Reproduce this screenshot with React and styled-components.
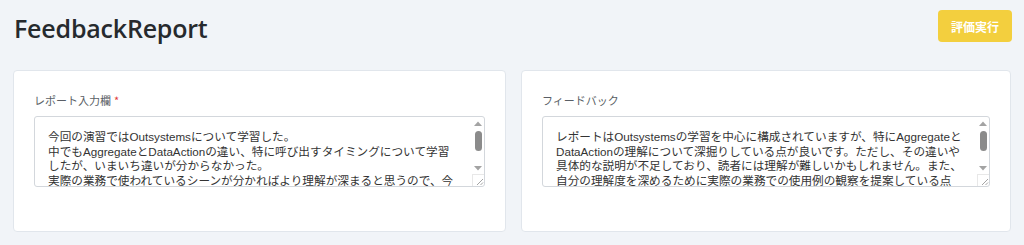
import React from "react";
import styled, { createGlobalStyle } from "styled-components";

const Global = createGlobalStyle`
  html, body { margin: 0; padding: 0; }
  body {
    background: #f1f4f8;
    font-family: "Noto Sans", "Noto Sans CJK JP", sans-serif;
    color: #333;
  }
`;

const Page = styled.div`
  display: flex;
  flex-direction: column;
  height: 245px;
  box-sizing: border-box;
`;

const Header = styled.header`
  display: flex;
  justify-content: space-between;
  align-items: flex-start;
  height: 70px;
  padding: 10px 12px 0 14px;
  box-sizing: border-box;
`;

const Title = styled.h1`
  margin: 2px 0 0;
  font-family: "Open Sans", "Noto Sans CJK JP", sans-serif;
  font-size: 25px;
  font-weight: 600;
  line-height: 32px;
  color: #262a2e;
  letter-spacing: -0.2px;
`;

const ActionButton = styled.button`
  width: 74px;
  height: 32px;
  border: none;
  border-radius: 4px;
  background: #f3cf3e;
  color: #fff;
  font-family: "Noto Sans CJK JP", sans-serif;
  font-size: 12px;
  font-weight: 700;
  cursor: pointer;
  padding: 0;
`;

const Panels = styled.main`
  display: grid;
  grid-template-columns: 493fr 490fr;
  gap: 15px;
  padding: 0 13px;
`;

const Card = styled.section`
  background: #fff;
  border: 1px solid #e1e6ec;
  border-radius: 4px;
  height: 162px;
  box-sizing: border-box;
  padding: 21px 20px 0;
  display: flex;
  flex-direction: column;
  gap: 8px;
  min-width: 0;
`;

const Label = styled.label`
  font-family: "Noto Sans CJK JP", sans-serif;
  font-size: 11px;
  line-height: 16px;
  color: #5a5f66;
`;

const Required = styled.span`
  color: #e03a3a;
  margin-left: 3px;
`;

const Field = styled.div`
  display: flex;
  height: 71px;
  box-sizing: border-box;
  border: 1px solid #d3d7dc;
  border-radius: 3px;
  background: #fff;
  overflow: hidden;
`;

const TextArea = styled.textarea`
  flex: 1;
  min-width: 0;
  height: 100%;
  box-sizing: border-box;
  border: none;
  padding: 13px 14px 0 13px;
  margin: 0;
  font-family: "Liberation Sans", "Noto Sans CJK JP", sans-serif;
  font-size: 11.65px;
  line-height: 14.5px;
  color: #333;
  background: transparent;
  resize: none;
  outline: none;
  overflow: hidden;
  text-autospace: no-autospace;
`;

const Rail = styled.div`
  width: 12px;
  flex: none;
  display: flex;
  flex-direction: column;
  align-items: center;
`;

const ArrowBox = styled.div`
  height: 12px;
  width: 100%;
  display: flex;
  align-items: center;
  justify-content: center;
`;

const Track = styled.div`
  flex: 1;
  width: 100%;
  display: flex;
  justify-content: center;
  padding-top: ${(p) => p.$offset}px;
  box-sizing: border-box;
`;

const Thumb = styled.div`
  width: 7px;
  height: ${(p) => p.$size}px;
  border-radius: 4px;
  background: #8b8b8b;
`;

const Grip = styled.div`
  width: 12px;
  height: 12px;
  box-sizing: border-box;
  border-left: 1px solid #e8e8e8;
  border-top: 1px solid #e8e8e8;
  display: flex;
  align-items: flex-end;
  justify-content: flex-end;
`;

function Arrow({ up }) {
  return (
    <ArrowBox>
      <svg width="8" height="5" viewBox="0 0 8 5">
        <path d={up ? "M0 5 L4 0.5 L8 5 Z" : "M0 0 L4 4.5 L8 0 Z"} fill="#a3a3a3" />
      </svg>
    </ArrowBox>
  );
}

function ResizeGrip() {
  return (
    <Grip>
      <svg width="10" height="10" viewBox="0 0 10 10">
        <path d="M9 3 L3 9 M9 6.5 L6.5 9" stroke="#9a9a9a" strokeWidth="0.9" fill="none" />
      </svg>
    </Grip>
  );
}

const reportText =
  "今回の演習ではOutsystemsについて学習した。\n中でもAggregateとDataActionの違い、特に呼び出すタイミングについて学習したが、いまいち違いが分からなかった。\n実際の業務で使われているシーンが分かればより理解が深まると思うので、今後は実際の業務の中でどのように使い分けられているのかを観察していきたい。\nまた、次回の演習ではScreenの作成やロジックの組み方についても学習し、理解を深めたい。";

const feedbackText =
  "レポートはOutsystemsの学習を中心に構成されていますが、特にAggregateとDataActionの理解について深掘りしている点が良いです。ただし、その違いや具体的な説明が不足しており、読者には理解が難しいかもしれません。また、自分の理解度を深めるために実際の業務での使用例の観察を提案している点は評価できます。今後は、学習した内容を具体的な例とともに整理し、AggregateとDataActionそれぞれの特徴や使い分けのポイントを自分の言葉でまとめると、より説得力のあるレポートになるでしょう。";

function Panel({ label, required, value }) {
  return (
    <Card>
      <Label>
        {label}
        {required && <Required>*</Required>}
      </Label>
      <Field>
        <TextArea defaultValue={value} />
        <Rail>
          <Arrow up />
          <Track $offset={2}>
            <Thumb $size={20} />
          </Track>
          <Arrow />
          <ResizeGrip />
        </Rail>
      </Field>
    </Card>
  );
}

export default function App() {
  return (
    <Page>
      <Global />
      <Header>
        <Title>FeedbackReport</Title>
        <ActionButton>評価実行</ActionButton>
      </Header>
      <Panels>
        <Panel label="レポート入力欄" required value={reportText} />
        <Panel label="フィードバック" value={feedbackText} />
      </Panels>
    </Page>
  );
}
